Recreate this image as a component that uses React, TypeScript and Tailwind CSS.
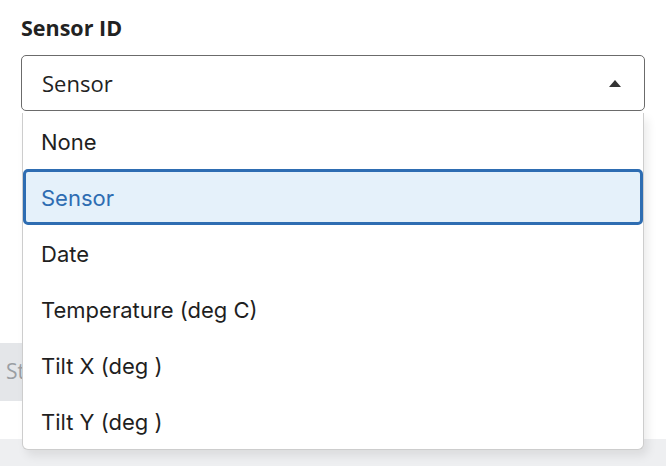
const OPTIONS = ['None', 'Sensor', 'Date', 'Temperature (deg C)', 'Tilt X (deg )', 'Tilt Y (deg )']

export default function App() {
  const selected = 'Sensor'

  return (
    <div className="relative h-[466px] w-[666px] overflow-hidden bg-white font-['Open_Sans',sans-serif]">
      <div className="flex flex-col pl-[21px] pr-[21px] pt-[13px]">
        <label className="text-[21.5px] font-bold leading-[30px] text-[#222]">Sensor ID</label>
        <div className="mt-[12px] flex h-[56px] items-center justify-between rounded-[5px] border border-[#6b6b6b] pl-[20px] pr-[23px]">
          <span className="text-[22px] leading-[30px] text-[#222]">{selected}</span>
          <span className="h-0 w-0 border-x-[6px] border-b-[7px] border-x-transparent border-b-[#333]" />
        </div>
      </div>

      {/* content behind the open menu */}
      <div className="mt-[232px] flex h-[58px] w-[200px] items-center bg-[#e4e6e9] pl-[6px]">
        <span className="text-[21px] text-[#9a9ea3]">Start</span>
      </div>
      <div className="mt-[38px] h-[40px] w-full bg-[#eeeff1]" />

      <div className="absolute left-[22px] top-[113px] w-[622px] rounded-b-[6px] border-x border-b border-[#cdcdcd] bg-white shadow-[4px_6px_10px_rgba(0,0,0,0.08)]">
        {OPTIONS.map((opt) => (
          <div
            key={opt}
            className={
              opt === selected
                ? 'flex h-[56px] items-center rounded-[5px] border-[3px] border-[#2e6db2] bg-[#e5f1fa] pl-[15px] pt-[2px] font-[Inter,sans-serif] text-[22px] text-[#2e6db2]'
                : 'flex h-[56px] items-center pl-[18px] pt-[2px] font-[Inter,sans-serif] text-[22px] text-[#1f1f1f]'
            }
          >
            {opt}
          </div>
        ))}
      </div>
    </div>
  )
}
